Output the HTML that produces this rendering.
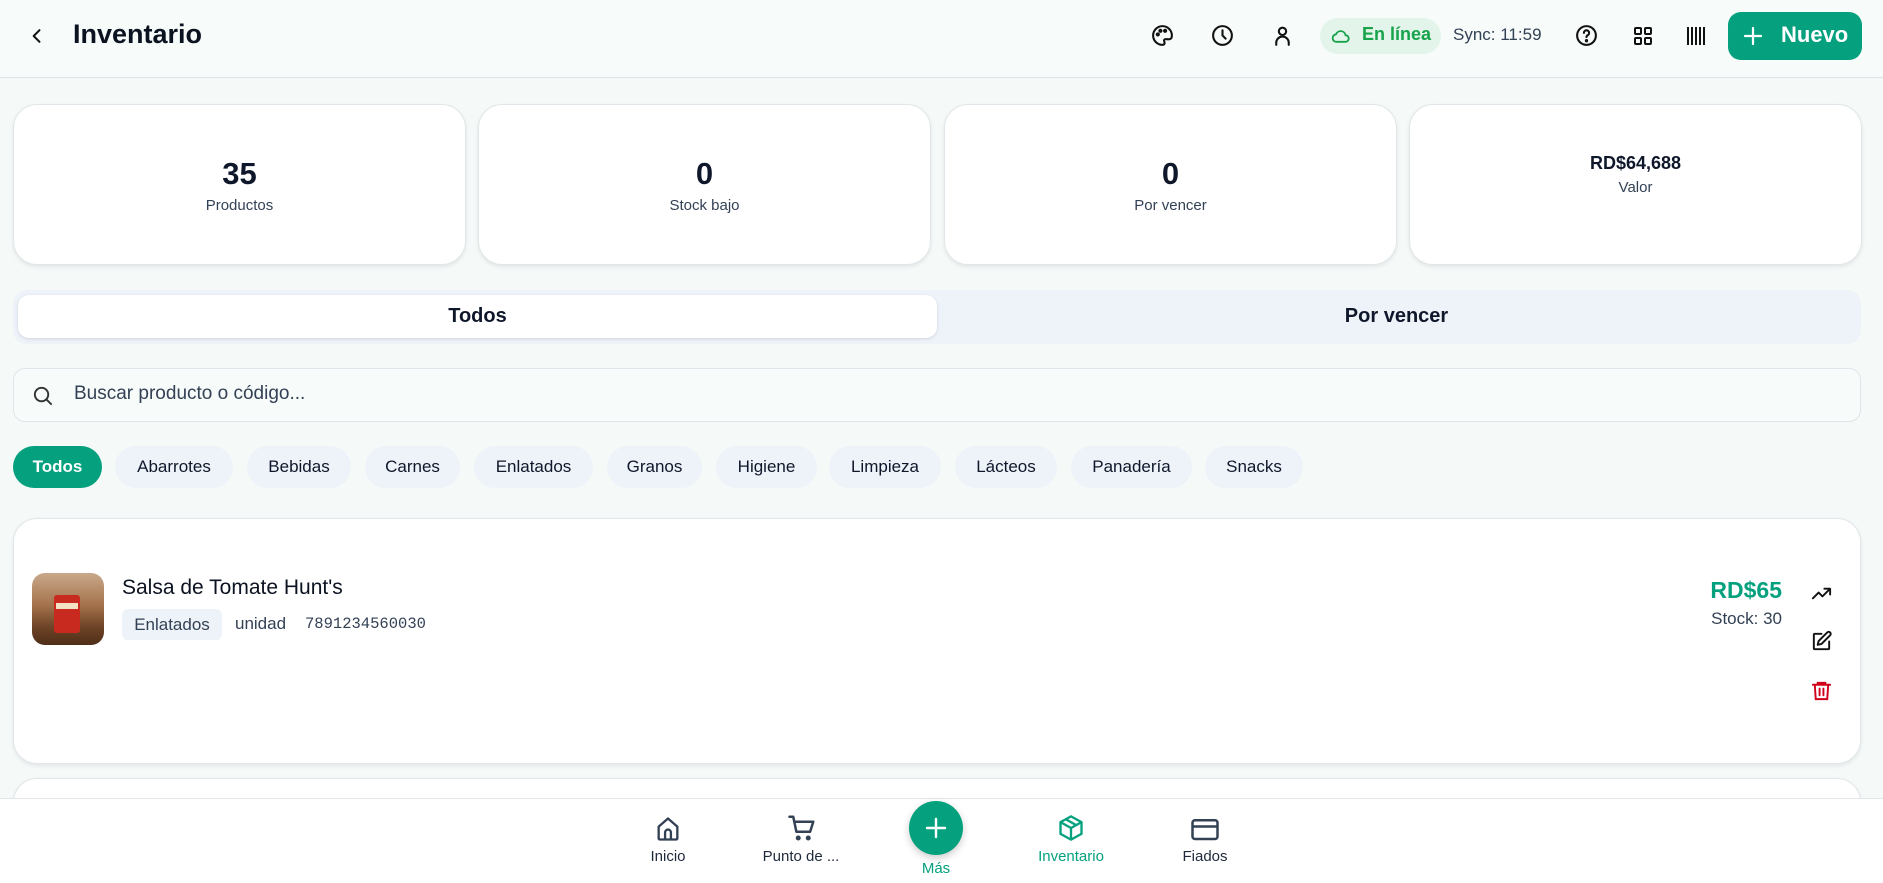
<!DOCTYPE html>
<html><head><meta charset="utf-8"><style>
*{box-sizing:border-box;margin:0;padding:0}
body{width:1883px;height:883px;overflow:hidden;background:#f5f9f8;font-family:"Liberation Sans",sans-serif;color:#0f172a;position:relative}
.a{position:absolute}
svg{display:block}
.hdr{left:0;top:0;width:1883px;height:78px;background:#f7fbfa;border-bottom:1.5px solid #dde3e8}
.card{background:#fff;border:1.5px solid #e1e6ea;border-radius:24px;box-shadow:0 2px 4px rgba(0,0,0,.08)}
.stat{top:104px;width:453px;height:161px;text-align:center}
.num{position:absolute;left:0;right:0;top:51px;font-size:31px;font-weight:bold;text-align:center}
.lbl{position:absolute;left:0;right:0;top:92px;font-size:15px;color:#334155;text-align:center}
.chip{top:446px;height:42px;border-radius:21px;background:#eef2f9;font-size:17px;line-height:42px;text-align:center;color:#0f172a}
.nav{font-size:15px;color:#1e293b;text-align:center;width:120px}
</style></head><body>
<div class="a hdr"></div>
<svg class="a" style="left:27px;top:26px" width="20" height="20" viewBox="0 0 24 24" fill="none" stroke="#111" stroke-width="2.4" stroke-linecap="round" stroke-linejoin="round"><path d="M15 5l-7 7 7 7"/></svg>
<div class="a" style="left:73px;top:19px;font-size:27px;font-weight:bold;color:#0b1220">Inventario</div>
<svg class="a" style="left:1150px;top:23px" width="25" height="25" viewBox="0 0 24 24" fill="none" stroke="#111" stroke-width="2" stroke-linecap="round" stroke-linejoin="round"><path d="M12 3a9 9 0 1 0 0 18c1.5 0 2-1 2-2 0-1.5-1.3-2 0-3.2C15 15 17 16 19 15.5 21 15 21 13 21 12a9 9 0 0 0-9-9z"/><circle cx="7.5" cy="11" r="1" fill="#111"/><circle cx="10" cy="7.5" r="1" fill="#111"/><circle cx="14.5" cy="7.5" r="1" fill="#111"/></svg>
<svg class="a" style="left:1210px;top:23px" width="25" height="25" viewBox="0 0 24 24" fill="none" stroke="#111" stroke-width="2" stroke-linecap="round"><circle cx="12" cy="12" r="9"/><path d="M12 7v5l3 3"/></svg>
<svg class="a" style="left:1270px;top:23px" width="25" height="25" viewBox="0 0 24 24" fill="none" stroke="#111" stroke-width="2" stroke-linecap="round"><circle cx="12" cy="8" r="3.5"/><path d="M6 21v-2a6 6 0 0 1 12 0v2"/></svg>
<div class="a" style="left:1320px;top:18px;width:121px;height:36px;border-radius:18px;background:#e3f5ea"></div>
<svg class="a" style="left:1331px;top:26px" width="20" height="20" viewBox="0 0 24 24" fill="none" stroke="#16a34a" stroke-width="2.2"><path d="M7 19h10a4 4 0 0 0 .5-8A6 6 0 0 0 6 10a4.5 4.5 0 0 0 1 9z"/></svg>
<div class="a" style="left:1362px;top:24px;font-size:18px;font-weight:bold;color:#16a34a">En línea</div>
<div class="a" style="left:1453px;top:25px;font-size:17px;color:#334155">Sync: 11:59</div>
<svg class="a" style="left:1574px;top:23px" width="25" height="25" viewBox="0 0 24 24" fill="none" stroke="#111" stroke-width="2" stroke-linecap="round"><circle cx="12" cy="12" r="9"/><path d="M9.5 9.5a2.5 2.5 0 1 1 3.5 2.3c-.7.4-1 .9-1 1.7"/><circle cx="12" cy="17" r=".6" fill="#111"/></svg>
<svg class="a" style="left:1631px;top:24px" width="24" height="24" viewBox="0 0 24 24" fill="none" stroke="#111" stroke-width="2"><rect x="4" y="4" width="6" height="6" rx="1"/><rect x="14" y="4" width="6" height="6" rx="1"/><rect x="4" y="14" width="6" height="6" rx="1"/><rect x="14" y="14" width="6" height="6" rx="1"/></svg>
<svg class="a" style="left:1686px;top:25px" width="22" height="22" viewBox="0 0 22 22" stroke="#111" stroke-width="2"><path d="M2 2v18M6 2v18M10 2v18M14 2v18M18 2v18"/></svg>
<div class="a" style="left:1728px;top:12px;width:134px;height:48px;border-radius:13px;background:#05a17f"></div>
<svg class="a" style="left:1743px;top:26px" width="20" height="20" viewBox="0 0 20 20" stroke="#fff" stroke-width="2.2" stroke-linecap="round"><path d="M10 2v16M2 10h16"/></svg>
<div class="a" style="left:1781px;top:22px;font-size:22px;font-weight:bold;color:#fff">Nuevo</div>

<div class="a card stat" style="left:13px"><div class="num">35</div><div class="lbl">Productos</div></div>
<div class="a card stat" style="left:478px"><div class="num">0</div><div class="lbl">Stock bajo</div></div>
<div class="a card stat" style="left:944px"><div class="num">0</div><div class="lbl">Por vencer</div></div>
<div class="a card stat" style="left:1409px"><div class="num" style="top:48px;font-size:18px">RD$64,688</div><div class="lbl" style="top:74px">Valor</div></div>

<div class="a" style="left:13px;top:290px;width:1848px;height:54px;border-radius:14px;background:#eef2f9"></div>
<div class="a" style="left:18px;top:295px;width:919px;height:43px;border-radius:11px;background:#fff;box-shadow:0 1px 3px rgba(0,0,0,.12);text-align:center;line-height:43px;font-size:20px;font-weight:bold">Todos</div>
<div class="a" style="left:937px;top:295px;width:919px;height:43px;text-align:center;line-height:43px;font-size:20px;font-weight:bold">Por vencer</div>

<div class="a" style="left:13px;top:368px;width:1848px;height:54px;border-radius:12px;background:#f7fbfa;border:1.5px solid #dfe5ea"></div>
<svg class="a" style="left:31px;top:384px" width="23" height="23" viewBox="0 0 24 24" fill="none" stroke="#333" stroke-width="2" stroke-linecap="round"><circle cx="11" cy="11" r="7"/><path d="M16 16l5 5"/></svg>
<div class="a" style="left:74px;top:383px;font-size:19px;color:#334155">Buscar producto o código...</div>

<div class="a chip" style="left:13px;width:89px;background:#05a17f;color:#fff;font-weight:bold">Todos</div>
<div class="a chip" style="left:115px;width:118px">Abarrotes</div>
<div class="a chip" style="left:247px;width:104px">Bebidas</div>
<div class="a chip" style="left:365px;width:95px">Carnes</div>
<div class="a chip" style="left:474px;width:119px">Enlatados</div>
<div class="a chip" style="left:607px;width:95px">Granos</div>
<div class="a chip" style="left:716px;width:101px">Higiene</div>
<div class="a chip" style="left:829px;width:112px">Limpieza</div>
<div class="a chip" style="left:955px;width:102px">Lácteos</div>
<div class="a chip" style="left:1071px;width:121px">Panadería</div>
<div class="a chip" style="left:1205px;width:98px">Snacks</div>

<div class="a card" style="left:13px;top:518px;width:1848px;height:246px"></div>
<div class="a card" style="left:13px;top:778px;width:1848px;height:80px"></div>
<div class="a" style="left:32px;top:573px;width:72px;height:72px;border-radius:13px;overflow:hidden;background:linear-gradient(180deg,#c9a98a 0%,#a4724c 45%,#6e4326 75%,#4f2e18 100%)">
<div class="a" style="left:22px;top:22px;width:26px;height:38px;border-radius:3px;background:#c92a20"></div>
<div class="a" style="left:24px;top:30px;width:22px;height:6px;background:#f3e1c4"></div></div>
<div class="a" style="left:122px;top:576px;font-size:21px;color:#0b1220">Salsa de Tomate Hunt's</div>
<div class="a" style="left:122px;top:609px;width:100px;height:31px;border-radius:6px;background:#eef2f9;font-size:17px;line-height:31px;text-align:center;color:#334155">Enlatados</div>
<div class="a" style="left:235px;top:614px;font-size:17px;color:#334155">unidad</div>
<div class="a" style="left:305px;top:615px;font-size:15.5px;font-family:'Liberation Mono',monospace;color:#334155">7891234560030</div>
<div class="a" style="right:101px;top:577px;font-size:23px;font-weight:bold;color:#05a17f">RD$65</div>
<div class="a" style="right:101px;top:609px;font-size:17px;color:#334155">Stock: 30</div>
<svg class="a" style="left:1810px;top:582px" width="23" height="23" viewBox="0 0 24 24" fill="none" stroke="#111" stroke-width="2" stroke-linecap="round" stroke-linejoin="round"><path d="M3 17l6-6 4 4 8-8M15 7h6v6"/></svg>
<svg class="a" style="left:1810px;top:630px" width="23" height="23" viewBox="0 0 24 24" fill="none" stroke="#111" stroke-width="2" stroke-linecap="round" stroke-linejoin="round"><path d="M12 4H5a1 1 0 0 0-1 1v14a1 1 0 0 0 1 1h14a1 1 0 0 0 1-1v-7"/><path d="M18 2.5a2.1 2.1 0 0 1 3 3L12 14.5l-4 1 1-4z"/></svg>
<svg class="a" style="left:1810px;top:679px" width="23" height="23" viewBox="0 0 24 24" fill="none" stroke="#d0021b" stroke-width="2" stroke-linecap="round"><path d="M3 6h18M8 6V4h8v2M5 6l1 15h12l1-15M10 10v7M14 10v7"/></svg>

<div class="a" style="left:0;top:798px;width:1883px;height:85px;background:#fff;border-top:1.5px solid #e2e6ea"></div>
<svg class="a" style="left:654px;top:815px" width="28" height="28" viewBox="0 0 24 24" fill="none" stroke="#334155" stroke-width="2" stroke-linejoin="round"><path d="M4 10l8-7 8 7v10a1 1 0 0 1-1 1H5a1 1 0 0 1-1-1z"/><path d="M9.5 21v-6a2.5 2.5 0 0 1 5 0v6"/></svg>
<div class="a nav" style="left:608px;top:848px">Inicio</div>
<svg class="a" style="left:787px;top:813px" width="30" height="30" viewBox="0 0 24 24" fill="none" stroke="#334155" stroke-width="2" stroke-linecap="round" stroke-linejoin="round"><path d="M2 3h3l2.5 12h11L21 7H6"/><circle cx="9" cy="20" r="1" fill="#334155"/><circle cx="17" cy="20" r="1" fill="#334155"/></svg>
<div class="a nav" style="left:741px;top:848px">Punto de ...</div>
<div class="a" style="left:909px;top:801px;width:54px;height:54px;border-radius:50%;background:#05a17f;box-shadow:0 3px 8px rgba(0,0,0,.2)"></div>
<svg class="a" style="left:924px;top:816px" width="24" height="24" viewBox="0 0 24 24" stroke="#fff" stroke-width="2.4" stroke-linecap="round"><path d="M12 3v18M3 12h18"/></svg>
<div class="a nav" style="left:876px;top:860px;color:#05a17f">Más</div>
<svg class="a" style="left:1057px;top:814px" width="28" height="28" viewBox="0 0 24 24" fill="none" stroke="#05a17f" stroke-width="2" stroke-linejoin="round"><path d="M12 2l9 5v10l-9 5-9-5V7z"/><path d="M3 7l9 5 9-5M12 12v10M7.5 4.5l9 5"/></svg>
<div class="a nav" style="left:1011px;top:848px;color:#05a17f">Inventario</div>
<svg class="a" style="left:1190px;top:815px" width="30" height="28" viewBox="0 0 24 22" fill="none" stroke="#334155" stroke-width="2"><rect x="2" y="4" width="20" height="15" rx="2"/><path d="M2 9h20"/></svg>
<div class="a nav" style="left:1145px;top:848px">Fiados</div>
</body></html>
